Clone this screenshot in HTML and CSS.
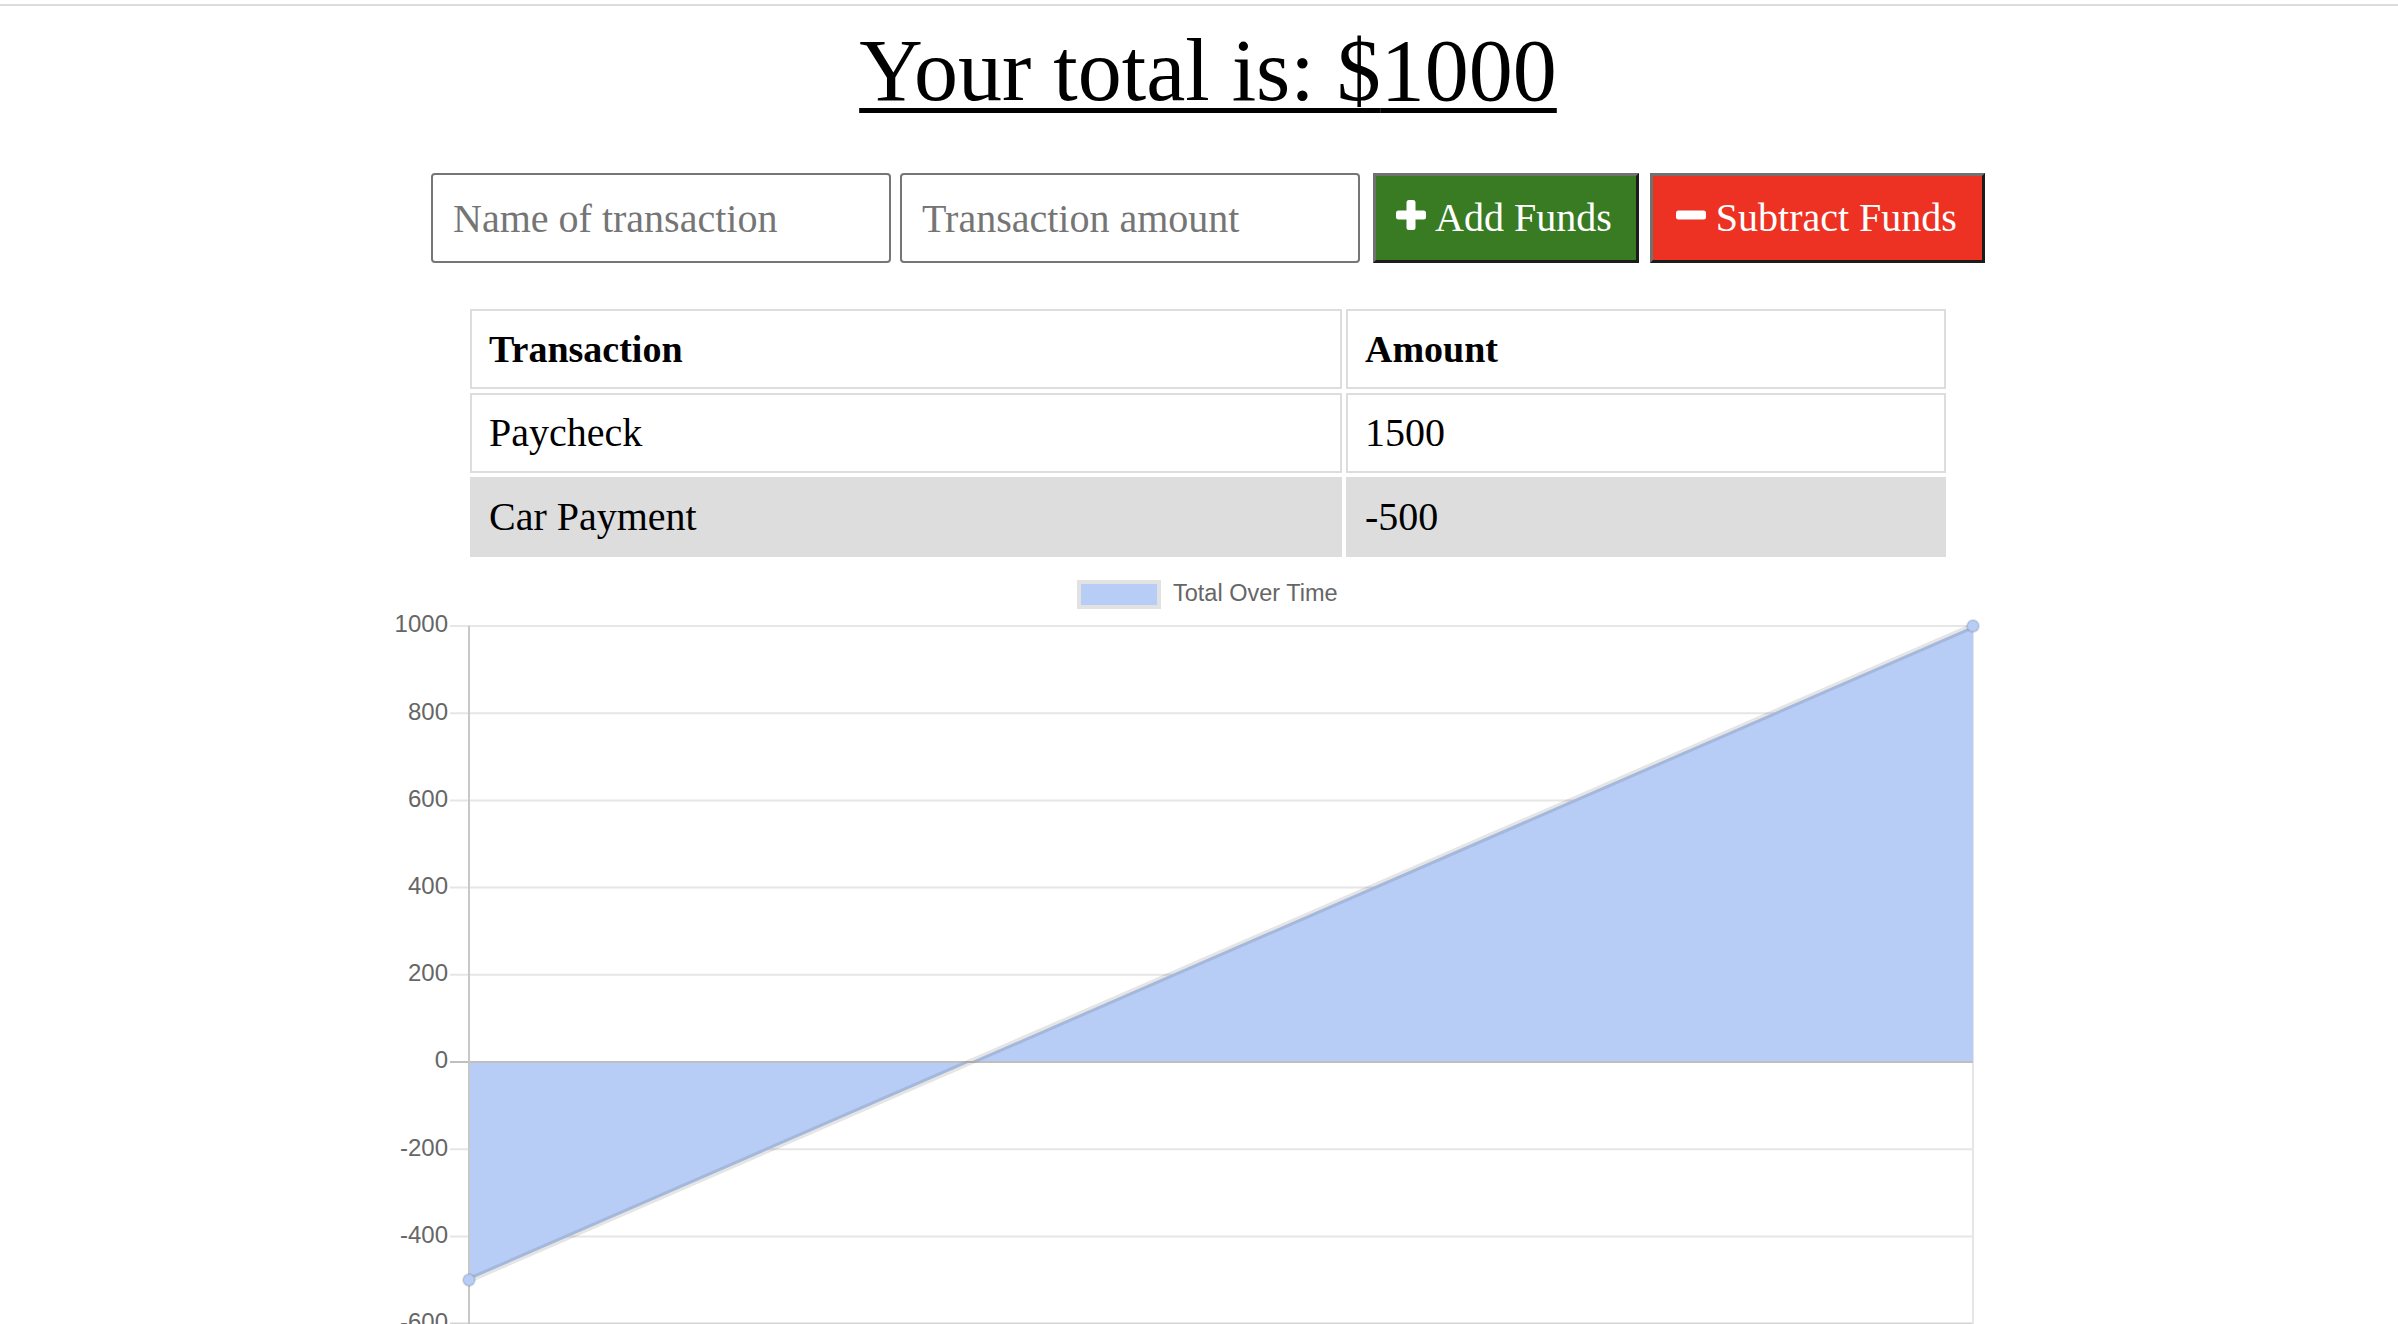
FILE: index.html
```html
<!DOCTYPE html>
<html lang="en">
<head>
<meta charset="utf-8">
<title>Budget Tracker</title>
<link rel="stylesheet" href="styles.css">
</head>
<body>
<div class="topline"></div>
<main class="page">
  <h1 class="total">Your total is: $<span>1000</span></h1>
  <form class="entry">
    <input class="field field-name" type="text" placeholder="Name of transaction">
    <input class="field field-amount" type="number" placeholder="Transaction amount">
    <button class="btn btn-add" type="button">
      <svg class="icon" width="30" height="30" viewBox="0 0 30 30"><rect x="10.5" y="0" width="9" height="30" rx="2.5" fill="#fff"/><rect x="0" y="10.5" width="30" height="9" rx="2.5" fill="#fff"/></svg>
      <span>Add Funds</span>
    </button>
    <button class="btn btn-sub" type="button">
      <svg class="icon" width="30" height="30" viewBox="0 0 30 30"><rect x="0" y="10.5" width="30" height="9" rx="2.5" fill="#fff"/></svg>
      <span>Subtract Funds</span>
    </button>
  </form>
  <table class="ledger">
    <thead>
      <tr><th class="col-name">Transaction</th><th>Amount</th></tr>
    </thead>
    <tbody>
      <tr><td>Paycheck</td><td>1500</td></tr>
      <tr class="neg"><td>Car Payment</td><td>-500</td></tr>
    </tbody>
  </table>
</main>
<svg class="chart" width="2398" height="800" viewBox="0 0 2398 800">
  <g class="legend">
    <rect x="1079" y="20" width="80" height="25" fill="#b7cdf5" stroke="#e2e2e2" stroke-width="4"/>
    <text x="1173" y="33" class="legend-text">Total Over Time</text>
  </g>
  <g class="grid" stroke="#e6e6e6" stroke-width="2">
    <line x1="450" y1="64" x2="1973" y2="64"/>
    <line x1="450" y1="151.2" x2="1973" y2="151.2"/>
    <line x1="450" y1="238.4" x2="1973" y2="238.4"/>
    <line x1="450" y1="325.6" x2="1973" y2="325.6"/>
    <line x1="450" y1="412.8" x2="1973" y2="412.8"/>
    <line x1="450" y1="587.2" x2="1973" y2="587.2"/>
    <line x1="450" y1="674.4" x2="1973" y2="674.4"/>
    <line x1="450" y1="761.6" x2="1973" y2="761.6" stroke="#d4d4d4"/>
    <line x1="1973" y1="64" x2="1973" y2="800"/>
  </g>
  <polygon points="469,500 469,718 1973,64 1973,500" fill="#b7cdf5"/>
  <line x1="450" y1="500" x2="1973" y2="500" stroke="#bfbfbf" stroke-width="2"/>
  <line x1="469" y1="64" x2="469" y2="800" stroke="#c8c8c8" stroke-width="2"/>
  <line x1="469" y1="718" x2="1973" y2="64" stroke="rgba(0,0,0,0.1)" stroke-width="6"/>
  <circle cx="469" cy="718" r="6" fill="#b7cdf5" stroke="rgba(0,0,0,0.1)" stroke-width="2"/>
  <circle cx="1973" cy="64" r="6" fill="#b7cdf5" stroke="rgba(0,0,0,0.1)" stroke-width="2"/>
  <g class="ticks">
    <text x="448" y="64">1000</text>
    <text x="448" y="151.2">800</text>
    <text x="448" y="238.4">600</text>
    <text x="448" y="325.6">400</text>
    <text x="448" y="412.8">200</text>
    <text x="448" y="500">0</text>
    <text x="448" y="587.2">-200</text>
    <text x="448" y="674.4">-400</text>
    <text x="448" y="761.6">-600</text>
  </g>
</svg>
</body>
</html>
```
FILE: styles.css
```css
html, body {
  margin: 0;
  padding: 0;
  background: #fff;
}

body {
  font-family: "Liberation Serif", "Times New Roman", serif;
  color: #000;
  overflow: hidden;
}

.topline {
  margin-top: 4px;
  height: 2px;
  background: #dcdcdc;
}

.page {
  padding-left: 18px;
}

.total {
  margin: 15px 0 0;
  font-size: 88px;
  font-weight: normal;
  line-height: 100px;
  text-align: center;
  text-decoration: underline;
  text-decoration-thickness: 5px;
  text-underline-offset: 8px;
}

.entry {
  margin: 52px 0 0;
  display: flex;
  justify-content: center;
  align-items: stretch;
}

.field {
  box-sizing: border-box;
  width: 460px;
  height: 90px;
  margin: 0;
  padding: 0 20px;
  border: 2px solid #767676;
  border-radius: 4px;
  font-family: "Liberation Serif", "Times New Roman", serif;
  font-size: 40px;
  color: #000;
  background: #fff;
  outline: none;
}

.field::placeholder {
  color: #757575;
}

.field-name {
  margin-right: 9px;
}

.field-amount {
  margin-right: 13px;
  -moz-appearance: textfield;
}

.field-amount::-webkit-outer-spin-button,
.field-amount::-webkit-inner-spin-button {
  -webkit-appearance: none;
  margin: 0;
}

.btn {
  box-sizing: border-box;
  height: 90px;
  margin: 0;
  display: flex;
  align-items: center;
  gap: 9px;
  padding: 0 24px 0 20px;
  border-width: 3px;
  border-style: solid;
  border-color: #717171 #1c1c1c #1c1c1c #717171;
  border-radius: 0;
  font-family: "Liberation Serif", "Times New Roman", serif;
  font-size: 40px;
  line-height: 44px;
  color: #fff;
  cursor: pointer;
}

.btn .icon {
  display: block;
  flex: none;
  margin-bottom: 6px;
}

.btn-add {
  background: #387b23;
  margin-right: 11px;
}

.btn-sub {
  background: #ed3224;
  padding-left: 23px;
  padding-right: 25px;
  gap: 10px;
}

.ledger {
  margin: 42px auto 0;
  width: 1484px;
  table-layout: fixed;
  border-collapse: separate;
  border-spacing: 4px;
  font-size: 40px;
}

.ledger th,
.ledger td {
  box-sizing: border-box;
  border: 2px solid #dddddd;
  padding: 16px 17px;
  line-height: 44px;
  text-align: left;
}

.ledger th {
  font-size: 38px;
  font-weight: bold;
}

.ledger .col-name {
  width: 872px;
}

.ledger .neg td {
  background: #dddddd;
}

.chart {
  display: block;
  margin-top: 1px;
}

.legend-text {
  font-family: "Liberation Sans", Arial, sans-serif;
  font-size: 23.5px;
  fill: #666666;
  dominant-baseline: middle;
}

.ticks text {
  font-family: "Liberation Sans", Arial, sans-serif;
  font-size: 24px;
  fill: #666666;
  text-anchor: end;
  dominant-baseline: middle;
}
```
